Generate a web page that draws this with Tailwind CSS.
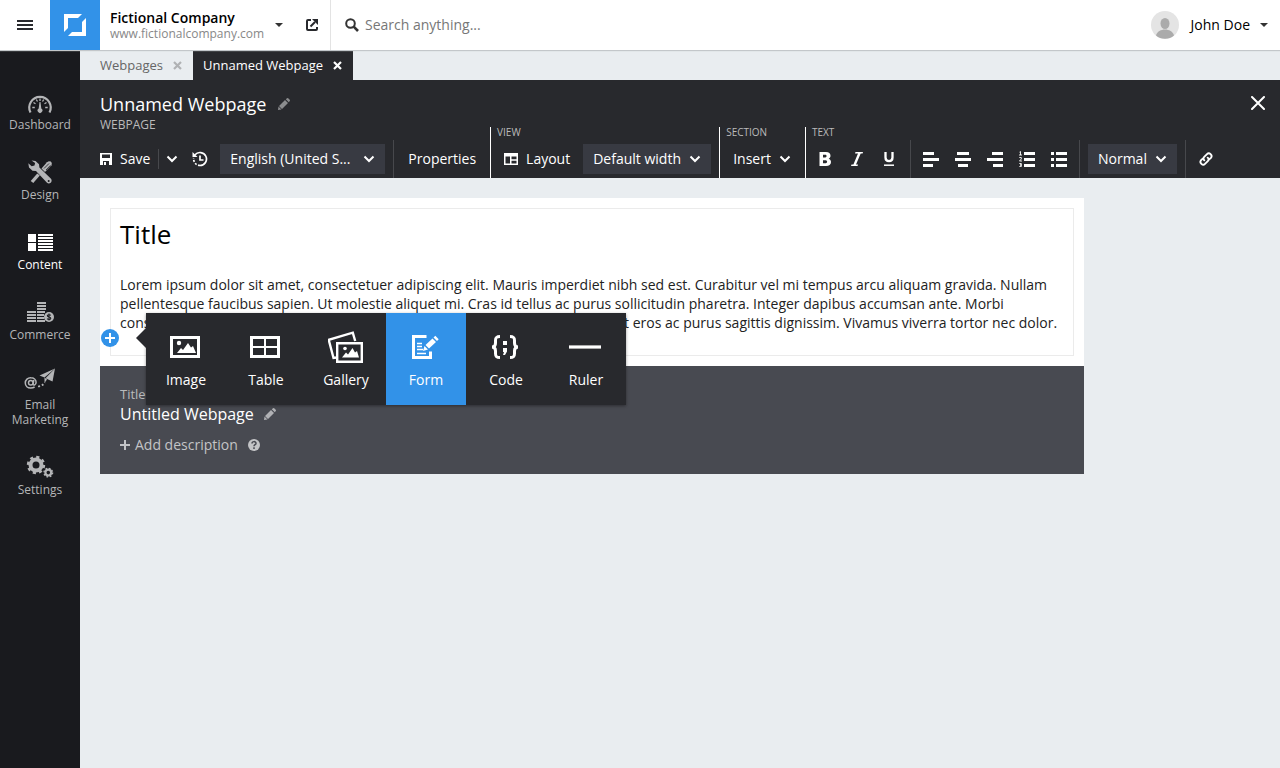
<!DOCTYPE html>
<html lang="en">

<head>
    <meta charset="UTF-8">
    <meta name="viewport" content="width=device-width, initial-scale=1.0">
    <title>Unnamed Webpage</title>
    <script src="https://cdn.jsdelivr.net/npm/@tailwindcss/browser@4"></script>
</head>

<body class="flex min-h-screen flex-col bg-[#e9edf0] font-['Open_Sans','Noto_Sans',sans-serif] text-sm text-black">

    <!-- Top bar -->
    <header class="relative z-10 flex h-[50px] items-center bg-white shadow-[0_1px_1px_#c3c7ca]">
        <button aria-label="Menu" class="flex h-full w-[50px] items-center justify-center">
            <svg width="16" height="10" fill="#28292d"><path d="M0 0h16v2H0zM0 4h16v2H0zM0 8h16v2H0z"/></svg>
        </button>
        <a href="#" aria-label="Home" class="flex h-full w-[50px] items-center justify-center bg-[#3292e8]">
            <svg width="22" height="22" viewBox="0 0 22 22" fill="#fff">
                <path d="M0 0h18L14 4H4v10L0 18z"/>
                <path d="M22 4v18H4l4-4h10V8z"/>
            </svg>
        </a>
        <div class="flex h-full items-center border-r border-[#e3e3e3] pr-3 pl-[10px]">
            <div class="w-[155px]">
                <div class="text-sm leading-[18px] font-semibold">Fictional Company</div>
                <div class="text-xs leading-[14px] text-[#888]">www.fictionalcompany.com</div>
            </div>
            <button aria-label="Switch company" class="ml-[10px]">
                <svg width="8" height="4" fill="#333"><path d="M0 0h8L4 4z"/></svg>
            </button>
            <button aria-label="Open site" class="ml-[23px]">
                <svg width="12" height="12" viewBox="0 0 12 12" fill="none" stroke="#28292d" stroke-width="2">
                    <path d="M5 1H2Q1 1 1 2v8q0 1 1 1h8q1 0 1-1V8"/>
                    <path d="M4.500 7.500L9 3"/>
                    <path d="M6 0h6v6z" fill="#28292d" stroke="none"/>
                </svg>
            </button>
        </div>
        <label for="search" class="ml-[14px]">
            <svg width="14" height="14" viewBox="0 0 14 14" fill="none" stroke="#333" stroke-width="2">
                <circle cx="5.500" cy="5.500" r="4.300"/>
                <path d="M8.700 8.700L13 13" stroke-width="2.600"/>
            </svg>
        </label>
        <input id="search" type="text" placeholder="Search anything..." class="ml-1.5 min-w-0 flex-1 outline-none placeholder:text-[#777]">
        <button class="flex items-center pr-3">
            <svg width="28" height="28" viewBox="0 0 28 28">
                <circle cx="14" cy="14" r="14" fill="#e4e4e4"/>
                <ellipse cx="14" cy="12.500" rx="4.500" ry="5.500" fill="#ababab"/>
                <path d="M5 24.500c1-4 5-6 9-6s8 2 9 6a14 14 0 0 1-18 0z" fill="#ababab"/>
            </svg>
            <span class="mr-[10px] ml-3">John Doe</span>
            <svg width="8" height="4" fill="#333"><path d="M0 0h8L4 4z"/></svg>
        </button>
    </header>

    <div class="flex flex-1">

        <!-- Sidebar -->
        <nav class="w-20 shrink-0 bg-[#191a1e] pt-[30px] text-center text-xs leading-[15px] text-[#b4b5b7]">
            <a href="#" class="flex flex-col items-center gap-px pt-2 pb-[18px]">
                <svg width="32" height="28" viewBox="0 0 32 28" fill="none" stroke="currentColor">
                    <path d="M6.500 24.500A10.700 10.700 0 1 1 25.500 24.500" stroke-width="2.200"/>
                    <path d="M8.300 19.500h2.500M23.700 19.500h-2.500M9.500 14.500l2 1.200M22.500 14.500l-2 1.200M12.300 11.500l1.200 2M19.700 11.500l-1.200 2M16 10.500v2.500" stroke-width="1.300"/>
                    <path d="M15.500 14h1l.8 6.500a2.400 2.400 0 1 1-2.600 0z" fill="currentColor" stroke="none"/>
                </svg>
                <span>Dashboard</span>
            </a>
            <a href="#" class="flex flex-col items-center gap-px pt-2 pb-[18px]">
                <svg width="32" height="28" viewBox="0 0 32 28" fill="currentColor">
                    <path d="M17.500 10.500l5.500-6.200 1.800-1 2 .2 1 1.500-.3 2.200-6.500 6.800z"/>
                    <path d="M20 10.500l5-5M22 12l4.500-4.700" stroke="#191a1e" stroke-width=".8"/>
                    <path d="M14.500 16.500l-6.500 7.500" stroke="currentColor" stroke-width="3.400"/>
                    <path d="M7.500 2.600l4 .4 3.500 3.200.4 3.200L27 20.800c1 1.300.8 3-.3 4s-2.700 1-3.700 0L12 13l-3.500-.3L5 9.500 4.300 5.300l3.400 3 2.800-.8.600-2.500z"/>
                    <circle cx="24.700" cy="23" r="1" fill="#191a1e"/>
                </svg>
                <span>Design</span>
            </a>
            <a href="#" class="flex flex-col items-center gap-px pt-2 pb-[18px] text-white">
                <svg width="32" height="28" viewBox="0 0 32 28" fill="currentColor">
                    <path d="M4 6h8v8H4zM4 15h8v8H4zM14 6h15v2H14zM14 9h15v2H14zM14 12h15v2H14zM14 15h15v2H14zM14 18h15v2H14zM14 21h15v2H14z"/>
                </svg>
                <span>Content</span>
            </a>
            <a href="#" class="flex flex-col items-center gap-px pt-2 pb-[18px]">
                <svg width="32" height="28" viewBox="0 0 32 28" fill="currentColor">
                    <path d="M13 4h9v2h-9zM13 7h9v2h-9zM13 10h9v2h-9zM13 13h8v2h-8zM13 16h7v2h-7zM13 19h7v2h-7zM13 22h8v2h-8zM3 13h9v2H3zM3 16h9v2H3zM3 19h9v2H3zM3 22h9v2H3z"/>
                    <circle cx="25" cy="19" r="5"/>
                    <path d="M26.800 17.300c-.7-.8-3.500-.9-3.500.5s3.500.9 3.500 2.400-2.800 1.400-3.700.4M25 15.500v7" fill="none" stroke="#191a1e" stroke-width="1.100"/>
                </svg>
                <span>Commerce</span>
            </a>
            <a href="#" class="flex flex-col items-center gap-px pt-2 pb-[18px]">
                <svg width="32" height="28" viewBox="0 0 32 28" fill="none" stroke="currentColor">
                    <circle cx="6.800" cy="14.800" r="2.300" stroke-width="1.500"/>
                    <path d="M9.800 12l-.7 4c0 1.800 3 1.500 3-1.700 0-2.800-2.400-4.600-5.200-4.600a5.300 5.300 0 0 0-5.600 5.300c0 3 2.400 5 5.400 5 1.600 0 2.800-.3 3.900-1" stroke-width="1.500"/>
                    <path d="M31 .500L15.500 7.500l5 2z" fill="currentColor" stroke="none"/>
                    <path d="M31 .500L21.500 10.200l7 3.300z" fill="currentColor" stroke="none"/>
                    <path d="M20.500 9.500v5.500l2.500-3.500z" fill="currentColor" stroke="none"/>
                    <path d="M14 18.500c3-.3 5-1.500 7-4" stroke-width="1.700" stroke-dasharray="2 2"/>
                </svg>
                <span>Email<br>Marketing</span>
            </a>
            <a href="#" class="flex flex-col items-center gap-px pt-2 pb-[18px]">
                <svg width="32" height="28" viewBox="0 0 32 28" fill="none" stroke="currentColor">
                    <circle cx="12" cy="12" r="5.500" stroke-width="4"/>
                    <circle cx="12" cy="12" r="8" stroke-width="2.400" stroke-dasharray="3.140 3.140"/>
                    <circle cx="24.300" cy="19.600" r="2.900" stroke-width="2.200"/>
                    <circle cx="24.300" cy="19.600" r="4.300" stroke-width="1.400" stroke-dasharray="1.690 1.690"/>
                </svg>
                <span>Settings</span>
            </a>
        </nav>

        <main class="min-w-0 flex-1">

            <!-- Tabs -->
            <div class="flex h-[30px] text-[13px]">
                <div class="flex items-center pr-[11px] pl-5 text-[#666]">
                    <a href="#">Webpages</a>
                    <button aria-label="Close Webpages" class="ml-[10px]">
                        <svg width="9" height="9" viewBox="0 0 9 9" stroke="#b0b2b4" stroke-width="2.200"><path d="M1 1l7 7M8 1L1 8"/></svg>
                    </button>
                </div>
                <div class="flex items-center bg-[#28292d] pr-[11px] pl-[10px] text-white">
                    <a href="#">Unnamed Webpage</a>
                    <button aria-label="Close Unnamed Webpage" class="ml-[10px]">
                        <svg width="9" height="9" viewBox="0 0 9 9" stroke="#fff" stroke-width="2.200"><path d="M1 1l7 7M8 1L1 8"/></svg>
                    </button>
                </div>
            </div>

            <!-- Editor header -->
            <section class="bg-[#28292d] text-white">
                <div class="flex items-start justify-between pt-3 pr-[15px] pl-5">
                    <div>
                        <div class="flex items-center gap-3">
                            <h1 class="text-lg leading-6">Unnamed Webpage</h1>
                            <button aria-label="Rename">
                                <svg width="12" height="12" viewBox="0 0 12 12" fill="#8b8c8e"><path d="M0 12l.5-3.500L3.500 11.500zM1 8L7 2l3 3-6 6zM7.800 1.200L9 .200q.6-.4 1.200.1L11.700 1.800q.5.600.1 1.200L10.800 4.200z"/></svg>
                            </button>
                        </div>
                        <div class="text-xs leading-[18px] text-[#bbb]">WEBPAGE</div>
                    </div>
                    <button aria-label="Close" class="mt-1">
                        <svg width="14" height="14" viewBox="0 0 14 14" stroke="#fff" stroke-width="2" stroke-linecap="round"><path d="M1 1l12 12M13 1L1 13"/></svg>
                    </button>
                </div>

                <div class="-mt-[7px] flex h-[51px] items-end pl-5">
                    <div class="flex h-[38px] items-center">
                        <button class="flex items-center gap-2">
                            <svg width="12" height="12" viewBox="0 0 12 12" fill="#fff" fill-rule="evenodd"><path d="M0 0h12v12H0zM2 1.500V5h8V1.500zM3 8v4h6V8zM4 9h2v3H4z"/></svg>
                            Save
                        </button>
                        <div class="ml-2 h-5 w-px bg-[#47484c]"></div>
                        <button aria-label="Save options" class="ml-[7px]">
                            <svg width="12" height="8" viewBox="0 0 12 8" fill="none" stroke="#fff" stroke-width="2"><path d="M1.500 1.500L6 6l4.500-4.500"/></svg>
                        </button>
                        <button aria-label="History" class="ml-[14px]">
                            <svg width="16" height="16" viewBox="0 0 16 16" fill="none" stroke="#fff" stroke-width="1.700">
                                <path d="M3 3.800A6.500 6.500 0 1 1 8 14.500"/>
                                <path d="M8 14.500A6.500 6.500 0 0 1 1.700 7" stroke-dasharray="2 1.500"/>
                                <path d="M.5 1v5h5z" fill="#fff" stroke="none"/>
                                <path d="M8 4.500V9h3.500"/>
                            </svg>
                        </button>
                        <div class="relative ml-3">
                            <select aria-label="Language" class="h-[30px] w-[165px] appearance-none bg-[#383a42] pl-[10px]">
                                <option>English (United S...</option>
                            </select>
                            <svg class="pointer-events-none absolute top-[11px] right-[10px]" width="12" height="8" viewBox="0 0 12 8" fill="none" stroke="#fff" stroke-width="2"><path d="M1.500 1.500L6 6l4.500-4.500"/></svg>
                        </div>
                        <div class="ml-2 h-full w-px bg-[#47484c]"></div>
                        <button class="px-[14px]">Properties</button>
                    </div>

                    <div class="border-l border-white">
                        <div class="h-[13px] pl-1.5 text-[10px] leading-[11px] text-[#bbb]">VIEW</div>
                        <div class="flex h-[38px] items-center">
                            <button class="flex items-center gap-2 px-[13px]">
                                <svg width="14" height="12" viewBox="0 0 14 12" fill="#fff" fill-rule="evenodd"><path d="M0 0h14v12H0zM1.500 3.500v7H6v-7zM7.500 3.500V6.300h5V3.500zM7.500 7.700v2.800h5V7.700z"/></svg>
                                Layout
                            </button>
                            <div class="relative mr-2">
                                <select aria-label="Width" class="h-[30px] w-32 appearance-none bg-[#383a42] pl-[10px]">
                                    <option>Default width</option>
                                </select>
                                <svg class="pointer-events-none absolute top-[11px] right-[10px]" width="12" height="8" viewBox="0 0 12 8" fill="none" stroke="#fff" stroke-width="2"><path d="M1.500 1.500L6 6l4.500-4.500"/></svg>
                            </div>
                        </div>
                    </div>

                    <div class="border-l border-white">
                        <div class="h-[13px] pl-1.5 text-[10px] leading-[11px] text-[#bbb]">SECTION</div>
                        <button class="flex h-[38px] items-center gap-2 pr-[14px] pl-[13px]">
                            Insert
                            <svg width="12" height="8" viewBox="0 0 12 8" fill="none" stroke="#fff" stroke-width="2"><path d="M1.500 1.500L6 6l4.500-4.500"/></svg>
                        </button>
                    </div>

                    <div class="border-l border-white">
                        <div class="h-[13px] pl-1.5 text-[10px] leading-[11px] text-[#bbb]">TEXT</div>
                        <div class="flex h-[38px] items-center pl-[3px]">
                            <button aria-label="Bold" class="flex w-8 justify-center">
                                <svg width="12" height="14" viewBox="0 0 12 14" fill="#fff" fill-rule="evenodd"><path d="M.5 0H7c3 0 4.500 1.500 4.500 3.700 0 1.400-.7 2.400-1.800 3 1.400.5 2.300 1.700 2.300 3.300C12 12.500 10 14 7 14H.5zM4 2.800v2.600h2.300c1.700 0 1.700-2.600 0-2.600zM4 8.200v3h2.700c1.900 0 1.900-3 0-3z"/></svg>
                            </button>
                            <button aria-label="Italic" class="flex w-8 justify-center">
                                <svg width="12" height="14" viewBox="0 0 12 14" fill="#fff"><path d="M4.500 0H12l-.4 1.500H9.700L5 12.500h2L6.500 14H0l.5-1.500h1.900L7 1.500H4z"/></svg>
                            </button>
                            <button aria-label="Underline" class="flex w-8 justify-center">
                                <svg width="12" height="14" viewBox="0 0 12 14" fill="none" stroke="#fff"><path d="M2.500 0v5.500c0 4.700 7 4.700 7 0V0" stroke-width="2.300"/><path d="M1 13.200h10" stroke-width="1.500"/></svg>
                            </button>
                            <div class="mr-1 ml-[5px] h-full w-px bg-[#47484c]"></div>
                            <button aria-label="Align left" class="flex w-8 justify-center">
                                <svg width="16" height="16" fill="#fff"><path d="M0 1h11v3H0zM0 7h16v3H0zM0 13h10v3H0z"/></svg>
                            </button>
                            <button aria-label="Align center" class="flex w-8 justify-center">
                                <svg width="16" height="16" fill="#fff"><path d="M2 1h12v3H2zM0 7h16v3H0zM3 13h10v3H3z"/></svg>
                            </button>
                            <button aria-label="Align right" class="flex w-8 justify-center">
                                <svg width="16" height="16" fill="#fff"><path d="M5 1h11v3H5zM0 7h16v3H0zM6 13h10v3H6z"/></svg>
                            </button>
                            <button aria-label="Numbered list" class="flex w-8 justify-center">
                                <svg width="16" height="16" viewBox="0 0 16 16" fill="#fff">
                                    <path d="M5 1h11v3H5zM5 7h11v3H5zM5 13h11v3H5z"/>
                                    <path d="M.5 1.200L1.500.5V4M0 4h3M.3 6.500h2v1.500L.5 10H3M.3 12.500h2v1.500H1h1.300v1.600H.3" fill="none" stroke="#fff" stroke-width=".9"/>
                                </svg>
                            </button>
                            <button aria-label="Bulleted list" class="flex w-8 justify-center">
                                <svg width="16" height="16" fill="#fff"><path d="M5 1h11v3H5zM5 7h11v3H5zM5 13h11v3H5zM0 1h3v3H0zM0 7h3v3H0zM0 13h3v3H0z"/></svg>
                            </button>
                            <div class="mx-1 h-full w-px bg-[#47484c]"></div>
                            <div class="relative mx-1">
                                <select aria-label="Text style" class="h-[30px] w-[89px] appearance-none bg-[#383a42] pl-[10px]">
                                    <option>Normal</option>
                                </select>
                                <svg class="pointer-events-none absolute top-[11px] right-[10px]" width="12" height="8" viewBox="0 0 12 8" fill="none" stroke="#fff" stroke-width="2"><path d="M1.500 1.500L6 6l4.500-4.500"/></svg>
                            </div>
                            <div class="mx-1 h-full w-px bg-[#47484c]"></div>
                            <button aria-label="Link" class="flex w-8 justify-center">
                                <svg width="14" height="14" viewBox="0 0 14 14" fill="none" stroke="#fff" stroke-width="1.900" stroke-linecap="round">
                                    <path d="M5.300 8.300C4 7 4.300 5.800 5.200 4.900L8 2.100c2.300-2.300 6 1.200 3.900 3.700L10.500 7.200"/>
                                    <path d="M8.700 5.700C10 7 9.700 8.200 8.800 9.100L6 11.900c-2.300 2.300-6-1.200-3.900-3.700L3.500 6.800"/>
                                </svg>
                            </button>
                        </div>
                    </div>
                </div>
            </section>

            <!-- Page being edited -->
            <div class="p-5">
                <article class="max-w-[984px]">
                    <div class="relative bg-white p-[10px]">
                        <div class="border border-[#ebebeb] px-[9px] pt-[7px] pb-[23px]">
                            <h2 class="text-[26px] leading-9">Title</h2>
                            <p class="mt-[23px] leading-[19px] text-[#222]">
                                Lorem ipsum dolor sit amet, consectetuer adipiscing elit. Mauris imperdiet nibh sed est. Curabitur vel mi tempus arcu aliquam gravida. Nullam<br>
                                pellentesque faucibus sapien. Ut molestie aliquet mi. Cras id tellus ac purus sollicitudin pharetra. Integer dapibus accumsan ante. Morbi<br>
                                consectetuer lacus at lorem pulvinar, vitae tempus nulla luctus. Nunc porta, ut eros ac purus sagittis dignissim. Vivamus viverra tortor nec dolor.
                            </p>
                        </div>

                        <!-- Insert button and its menu -->
                        <button aria-label="Add element" class="absolute top-[131px] left-px">
                            <svg width="18" height="18" viewBox="0 0 18 18"><circle cx="9" cy="9" r="9" fill="#3292e8"/><path d="M8 4h2v4h4v2h-4v4H8v-4H4V8h4z" fill="#fff"/></svg>
                        </button>
                        <div class="absolute top-[115px] left-[46px] z-10 flex bg-[#28292d] text-white shadow-[0_1px_3px_rgba(0,0,0,0.4)]">
                            <svg class="absolute top-[15px] right-full" width="10" height="20" fill="#28292d"><path d="M10 0v20L0 10z"/></svg>
                            <button class="flex h-[92px] w-20 flex-col items-center gap-[5px] pt-4">
                                <svg width="36" height="36" viewBox="0 0 36 36" fill="#fff">
                                    <path d="M2 7h30v22H2zM5 10v16h24V10z" fill-rule="evenodd"/>
                                    <circle cx="11" cy="14" r="2.200"/>
                                    <path d="M9 24l4-5 2 2 5-7 3 4.500 2-1.500 3 7z"/>
                                </svg>
                                <span>Image</span>
                            </button>
                            <button class="flex h-[92px] w-20 flex-col items-center gap-[5px] pt-4">
                                <svg width="36" height="36" viewBox="0 0 36 36" fill="#fff" fill-rule="evenodd"><path d="M2 7h30v22H2zM5 10v7h11v-7zM18 10v7h11v-7zM5 19v7h11v-7zM18 19v7h11v-7z"/></svg>
                                <span>Table</span>
                            </button>
                            <button class="flex h-[92px] w-20 flex-col items-center gap-[5px] pt-4">
                                <svg width="36" height="36" viewBox="0 0 36 36" fill="none" stroke="#fff">
                                    <path d="M9 28.500L5.500 29 .700 10.800 24.800 3.700l2.400 8.300" stroke-width="2.400"/>
                                    <path d="M9.200 14.200h24.600v18.600H9.200z" fill="#28292d" stroke-width="2.400"/>
                                    <circle cx="17" cy="19.500" r="1.800" fill="#fff" stroke="none"/>
                                    <path d="M14 28.500l4-5 2 2 4.500-6.500 2.500 4.500 2-1.500 2 6.500z" fill="#fff" stroke="none"/>
                                </svg>
                                <span>Gallery</span>
                            </button>
                            <button class="flex h-[92px] w-20 flex-col items-center gap-[5px] bg-[#3292e8] pt-4">
                                <svg width="36" height="36" viewBox="0 0 36 36" fill="none" stroke="#fff">
                                    <path d="M18.500 7.500H5.500v21h17v-6" stroke-width="3"/>
                                    <path d="M9 14.500h5M9 17.500h5M9 20.500h6M9 24.500h9" stroke-width="1.500"/>
                                    <path d="M15 22l1.500-5 3.500 3.500zM17.500 16L24.500 9.500 28 13l-7 6.500zM25.500 8.500l1.800-1.700 3.400 3.500-1.700 1.700z" fill="#fff" stroke="none"/>
                                </svg>
                                <span>Form</span>
                            </button>
                            <button class="flex h-[92px] w-20 flex-col items-center gap-[5px] pt-4">
                                <svg width="36" height="36" viewBox="0 0 36 36" fill="none" stroke="#fff" stroke-width="3">
                                    <path d="M12 7.500c-4 0-4.500 1.500-4.500 4v2.500c0 2.500-1 4-3.500 4 2.500 0 3.500 1.500 3.500 4v2.500c0 2.500.5 4 4.500 4"/>
                                    <path d="M22 7.500c4 0 4.500 1.500 4.500 4v2.500c0 2.500 1 4 3.500 4-2.500 0-3.500 1.500-3.500 4v2.500c0 2.500-.5 4-4.500 4"/>
                                    <path d="M15 12h4v4h-4zM15 19h4v3.500L17 26h-2l1-3h-1z" fill="#fff" stroke="none"/>
                                </svg>
                                <span>Code</span>
                            </button>
                            <button class="flex h-[92px] w-20 flex-col items-center gap-[5px] pt-4">
                                <svg width="36" height="36" viewBox="0 0 36 36" fill="#fff"><path d="M1 16h32v4H1z" fill="#aaa"/><path d="M1 17h32v2H1z"/></svg>
                                <span>Ruler</span>
                            </button>
                        </div>
                    </div>

                    <!-- Page details -->
                    <div class="bg-[#484a51] px-5 pt-5 pb-[18px]">
                        <div class="text-[13px] leading-4 text-[#b9babc]">Title</div>
                        <div class="flex items-center gap-[10px] text-white">
                            <span class="text-base leading-6">Untitled Webpage</span>
                            <button aria-label="Edit title">
                                <svg width="12" height="12" viewBox="0 0 12 12" fill="#b0b1b4"><path d="M0 12l.5-3.500L3.500 11.500zM1 8L7 2l3 3-6 6zM7.800 1.200L9 .200q.6-.4 1.200.1L11.700 1.800q.5.600.1 1.200L10.800 4.200z"/></svg>
                            </button>
                        </div>
                        <div class="mt-2 flex items-center gap-[10px] leading-[22px] text-[#c3c4c6]">
                            <button class="flex items-center gap-[5px]">
                                <svg width="10" height="10" fill="#c3c4c6"><path d="M4 0h2v4h4v2H6v4H4V6H0V4h4z"/></svg>
                                Add description
                            </button>
                            <button aria-label="Help">
                                <svg width="12" height="12" viewBox="0 0 12 12"><circle cx="6" cy="6" r="6" fill="#c3c4c6"/><path d="M4 4.600C4 2 8 2 8 4.400 8 5.700 6 5.700 6 7.300M6 8.300v1.600" fill="none" stroke="#484a51" stroke-width="1.500"/></svg>
                            </button>
                        </div>
                    </div>
                </article>
            </div>
        </main>
    </div>

</body>

</html>
